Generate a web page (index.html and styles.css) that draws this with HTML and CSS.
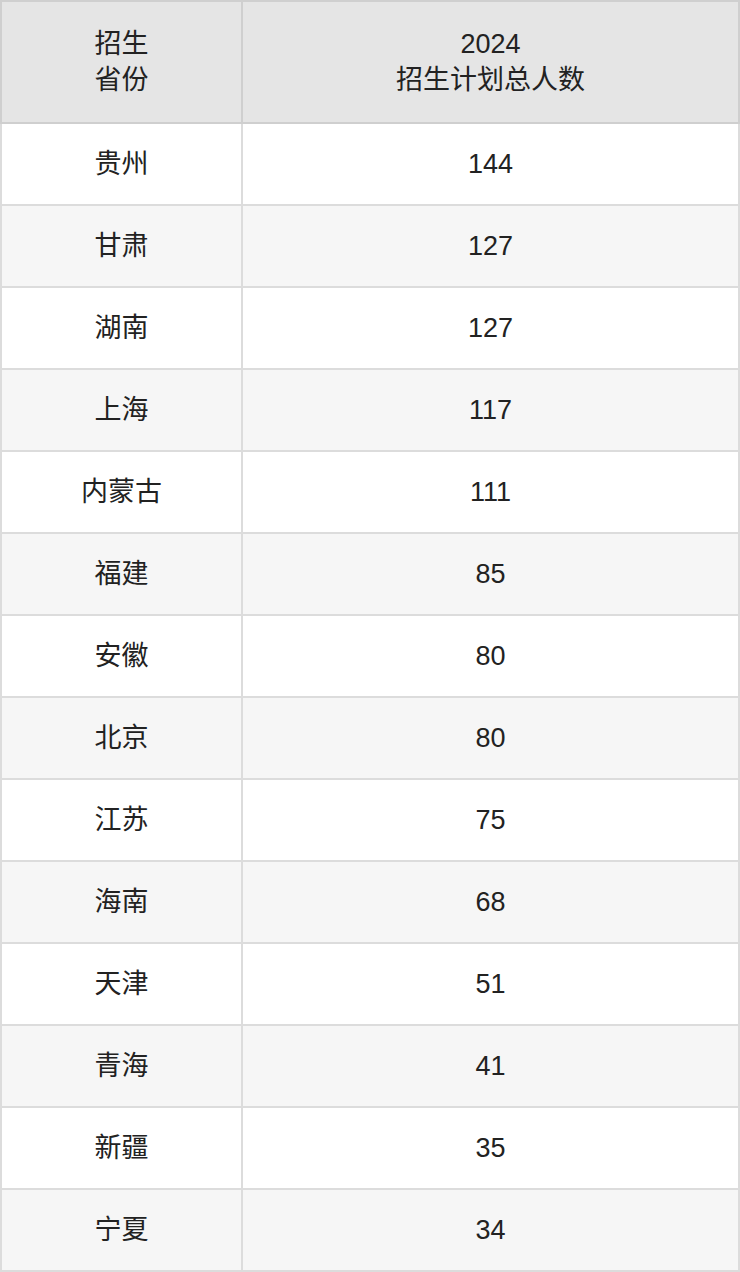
FILE: index.html
```html
<!DOCTYPE html>
<html lang="zh">
<head>
<meta charset="utf-8">
<link rel="stylesheet" href="styles.css">
</head>
<body>
<table class="plan">
  <thead>
    <tr><th class="col-prov">招生<br>省份</th><th>2024<br>招生计划总人数</th></tr>
  </thead>
  <tbody>
    <tr><td>贵州</td><td>144</td></tr>
    <tr><td>甘肃</td><td>127</td></tr>
    <tr><td>湖南</td><td>127</td></tr>
    <tr><td>上海</td><td>117</td></tr>
    <tr><td>内蒙古</td><td>111</td></tr>
    <tr><td>福建</td><td>85</td></tr>
    <tr><td>安徽</td><td>80</td></tr>
    <tr><td>北京</td><td>80</td></tr>
    <tr><td>江苏</td><td>75</td></tr>
    <tr><td>海南</td><td>68</td></tr>
    <tr><td>天津</td><td>51</td></tr>
    <tr><td>青海</td><td>41</td></tr>
    <tr><td>新疆</td><td>35</td></tr>
    <tr><td>宁夏</td><td>34</td></tr>
  </tbody>
</table>
</body>
</html>
```
FILE: styles.css
```css
html, body {
  margin: 0;
  padding: 0;
  background: #fff;
}
.plan {
  width: 740px;
  border-collapse: collapse;
  table-layout: fixed;
  font-family: "Liberation Sans", "Noto Sans CJK SC", sans-serif;
  font-size: 27px;
  color: #222;
}
.plan th, .plan td {
  border: 2px solid #dcdcdc;
  text-align: center;
  vertical-align: middle;
  padding: 0;
  box-sizing: border-box;
}
.plan th {
  background: #e5e5e5;
  font-weight: normal;
  height: 122px;
  line-height: 36px;
  border-color: #cfcfcf;
}
.plan .col-prov {
  width: 241px;
}
.plan td {
  height: 82px;
  line-height: 36px;
}
.plan tbody tr:nth-child(even) td {
  background: #f6f6f6;
}
```
